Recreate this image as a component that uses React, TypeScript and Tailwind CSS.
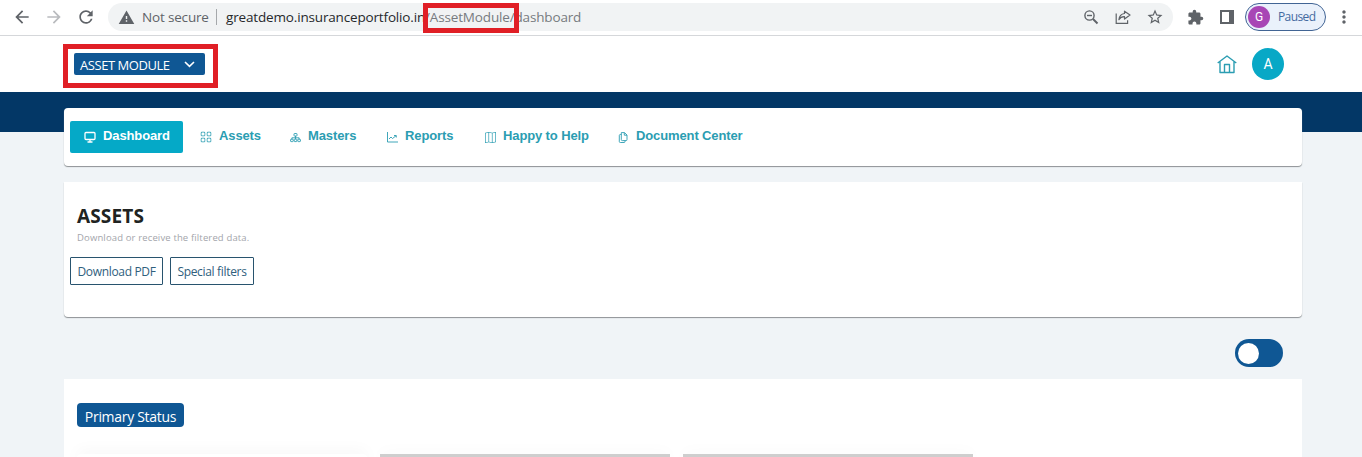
import type { ReactNode } from "react";
import { BsGrid, BsMap } from "react-icons/bs";
import { MdArrowBack, MdArrowForward, MdExtension, MdMoreVert, MdRefresh, MdStarBorder, MdWarning } from "react-icons/md";

function BrowserBar() {
  return (
    <div className="flex h-9 items-start border-b border-[#d5d7da] bg-white text-[#5f6368]">
      <div className="flex h-[34px] w-[108px] shrink-0 items-center pl-[12px]">
        <MdArrowBack size={20} />
        <MdArrowForward size={20} className="ml-[12px] text-[#b9bbbe]" />
        <MdRefresh size={20} className="ml-[12px]" />
      </div>
      <div className="relative mt-[3px] flex h-7 w-[1065px] shrink-0 items-center rounded-full bg-[#f1f3f4] pl-[10px] pr-[9px] text-[13.500px]">
        <MdWarning size={17} />
        <span className="ml-[7px] w-[68px] whitespace-nowrap tracking-[-0.17px]">Not secure</span>
        <span className="ml-[6px] h-4 w-px bg-[#a5a8ab]" />
        <span className="ml-[9px] whitespace-nowrap text-[#777b7f] tracking-[-0.16px]">
          <span className="text-[#26282b]">greatdemo.insuranceportfolio.in</span>/AssetModule/dashboard
        </span>
        <div className="absolute left-[315px] top-0 h-[30px] w-[96px] border-5 border-[#e01f26]" />
        <div className="ml-auto flex items-center gap-[15px]">
          <svg width="18" height="18" viewBox="0 0 18 18" fill="none" stroke="currentColor" strokeWidth="1.4">
            <circle cx="7.5" cy="7.500" r="4.600" />
            <path d="M5 7.500h5" />
            <path d="m11 11 4.500 4.500" strokeWidth="1.900" />
          </svg>
          <svg width="16" height="16" viewBox="0 0 16 16" fill="none" stroke="currentColor" strokeWidth="1.2">
            <path d="M1.2 4.5v9.8h11.4v-3" />
            <path d="M9.5 2.2 15 6.1l-5.5 4V7.7C6.8 7.6 5.1 8.6 3.9 10.7 4.3 7.2 6.3 5 9.5 4.500Z" strokeLinejoin="round" />
          </svg>
          <MdStarBorder size={18} />
        </div>
      </div>
      <div className="flex h-[34px] items-center pl-[14px]">
        <MdExtension size={17} />
        <svg className="ml-4" width="14" height="14" viewBox="0 0 14 14">
          <path fill="currentColor" fillRule="evenodd" d="M0 0h14v14H0ZM2 2v10h7V2Z" />
        </svg>
        <div className="ml-[11px] flex h-7 w-[81px] items-center rounded-full border border-[#416494] bg-[#eaf1fb] pl-[2px]">
          <span className="flex size-[22px] items-center justify-center rounded-full bg-[#a846b5] font-['Roboto',sans-serif] text-[12px] text-white">G</span>
          <span className="ml-2 text-[12px] tracking-[-0.6px] text-[#44699f]">Paused</span>
        </div>
        <MdMoreVert size={20} className="ml-[8px]" />
      </div>
    </div>
  );
}

function HomeIcon() {
  return (
    <svg width="20" height="19" viewBox="0 0 20 19" fill="none" stroke="#2b9db2" strokeWidth="1.4" strokeLinejoin="round">
      <path d="M.7 8 10 1l9.3 7M3 6.5V17.500h14V6.500M7.500 17.500V9.500h5v8" />
    </svg>
  );
}

function DisplayIcon() {
  return (
    <svg width="12" height="12" viewBox="0 0 12 12" fill="none" stroke="currentColor" strokeWidth="1.3">
      <rect x="1" y="1.500" width="10" height="7" rx="1" />
      <path d="M6 8.500V11M3.500 11h5" />
    </svg>
  );
}

function TreeIcon() {
  return (
    <svg width="11" height="11" viewBox="0 0 11 11" fill="none" stroke="currentColor" strokeWidth="0.9">
      <rect x="4" y="1.500" width="3" height="2.500" rx=".5" />
      <path d="M5.500 4v3M1.900 7.500V5.800h7.200v1.700" />
      <rect x=".6" y="7.200" width="2.600" height="2.400" rx=".5" />
      <rect x="4.200" y="7.200" width="2.600" height="2.400" rx=".5" />
      <rect x="7.800" y="7.200" width="2.600" height="2.400" rx=".5" />
    </svg>
  );
}

function TrendIcon() {
  return (
    <svg width="11" height="11" viewBox="0 0 11 11" fill="none" stroke="currentColor" strokeWidth="0.9">
      <path d="M.5 0v10H11M2 7l2-2 1.500 1.500L9 3.800M7 3.500h2.300v2" />
    </svg>
  );
}

function DocumentsIcon() {
  return (
    <svg width="10" height="11" viewBox="0 0 10 11" fill="none" stroke="currentColor" strokeWidth="0.9" strokeLinejoin="round">
      <path d="M3.300.6h3.200L9 3v4.600a1 1 0 0 1-1 1H4.300a1 1 0 0 1-1-1ZM6.300.8v2.400H9" />
      <path d="M3.300 2.500h-1a1 1 0 0 0-1 1v6a1 1 0 0 0 1 1H6a1 1 0 0 0 1-1v-.9" />
    </svg>
  );
}

function NavItem({ icon, label, className }: { icon: ReactNode; label: string; className: string }) {
  return (
    <a className={`flex h-8 shrink-0 items-center whitespace-nowrap ${className}`}>
      <span className="flex w-3 shrink-0 justify-center">{icon}</span>
      <span className="-mt-[3px] ml-[7px] tracking-[-0.12px]">{label}</span>
    </a>
  );
}

export default function App() {
  return (
    <div className="h-[457px] w-[1362px] overflow-hidden bg-[#f0f4f7] font-['Open_Sans',sans-serif]">
      <BrowserBar />
      <header className="flex h-14 items-start justify-between bg-white pl-[63px] pr-[78px]">
        <div className="mt-2 h-11 w-[155px] border-5 border-[#e01f26] pl-[6px] pt-1">
          <button className="flex h-[22px] w-[131px] items-center rounded-[2px] bg-[#0f5794] pl-[6px] text-[13px] text-white">
            <span className="mt-[3px] w-[90px] whitespace-nowrap text-left tracking-[-0.45px]">ASSET MODULE</span>
            <svg className="ml-[14px]" width="11" height="7" viewBox="0 0 11 7" fill="none" stroke="white" strokeWidth="1.6">
              <path d="m1 1 4.500 4.300L10 1" />
            </svg>
          </button>
        </div>
        <div className="mt-3 flex items-center gap-[15px]">
          <HomeIcon />
          <span className="flex size-8 items-center justify-center rounded-full bg-[#08a8c6] font-['Roboto',sans-serif] text-[14px] text-white">A</span>
        </div>
      </header>
      <div className="h-10 bg-[#033766]" />
      <main className="relative -mt-6 ml-16 w-[1238px]">
        <nav className="flex h-[58px] items-start rounded-[4px] bg-white pl-[6px] pt-[13px] font-['Liberation_Sans',sans-serif] text-[13px] font-bold text-[#2b9db2] shadow-[0_1px_1px_#8d9194]">
          <NavItem className="w-[113px] rounded-[2px] bg-[#05a9c7] pl-[14px] text-white" icon={<DisplayIcon />} label="Dashboard" />
          <NavItem className="ml-[17px] w-[89px]" icon={<BsGrid size={12} />} label="Assets" />
          <NavItem className="w-[97px]" icon={<TreeIcon />} label="Masters" />
          <NavItem className="w-[98px]" icon={<TrendIcon />} label="Reports" />
          <NavItem className="w-[133px]" icon={<BsMap size={11} />} label="Happy to Help" />
          <NavItem className="w-[130px]" icon={<DocumentsIcon />} label="Document Center" />
        </nav>
        <section className="mt-4 h-[135px] rounded-b-[4px] bg-white pl-[6px] pt-[22px] shadow-[0_1px_1px_#8d9194]">
          <h1 className="ml-[7px] text-[19px] font-bold leading-6 tracking-[0.15px] text-[#202322]">ASSETS</h1>
          <p className="ml-[7px] mt-[3px] text-[9.500px] leading-[14px] tracking-[0.14px] text-[#a3a5ab]">Download or receive the filtered data.</p>
          <div className="mt-3 flex gap-[7px] text-[12px] tracking-[-0.32px] text-[#2f607d]">
            <button className="h-7 w-[93px] whitespace-nowrap rounded-[1px] border border-[#28536e] pt-[2px]">Download PDF</button>
            <button className="h-7 w-[84px] whitespace-nowrap rounded-[1px] border border-[#28536e] pt-[2px]">Special filters</button>
          </div>
        </section>
        <div className="flex h-[62px] items-start justify-end pr-[19px] pt-[22px]">
          <div className="flex h-7 w-12 items-center rounded-full bg-[#0f5794] pl-[3px]">
            <span className="size-[21px] rounded-full bg-white" />
          </div>
        </div>
        <section className="h-[78px] bg-white pl-[13px] pt-6">
          <span className="flex h-6 w-[107px] items-center justify-center whitespace-nowrap rounded-[4px] bg-[#0f5794] pt-[2px] text-[14px] tracking-[-0.3px] text-white">Primary Status</span>
          <div className="mt-[27px] flex gap-[13px]">
            <div className="h-1 w-[290px] rounded-t bg-white shadow-[0_0_16px_#0000001a]" />
            <div className="h-1 w-[290px] bg-[#cecece] shadow-[0_0_16px_#0000000f]" />
            <div className="h-1 w-[290px] bg-[#cecece] shadow-[0_0_16px_#0000000f]" />
          </div>
        </section>
      </main>
    </div>
  );
}
